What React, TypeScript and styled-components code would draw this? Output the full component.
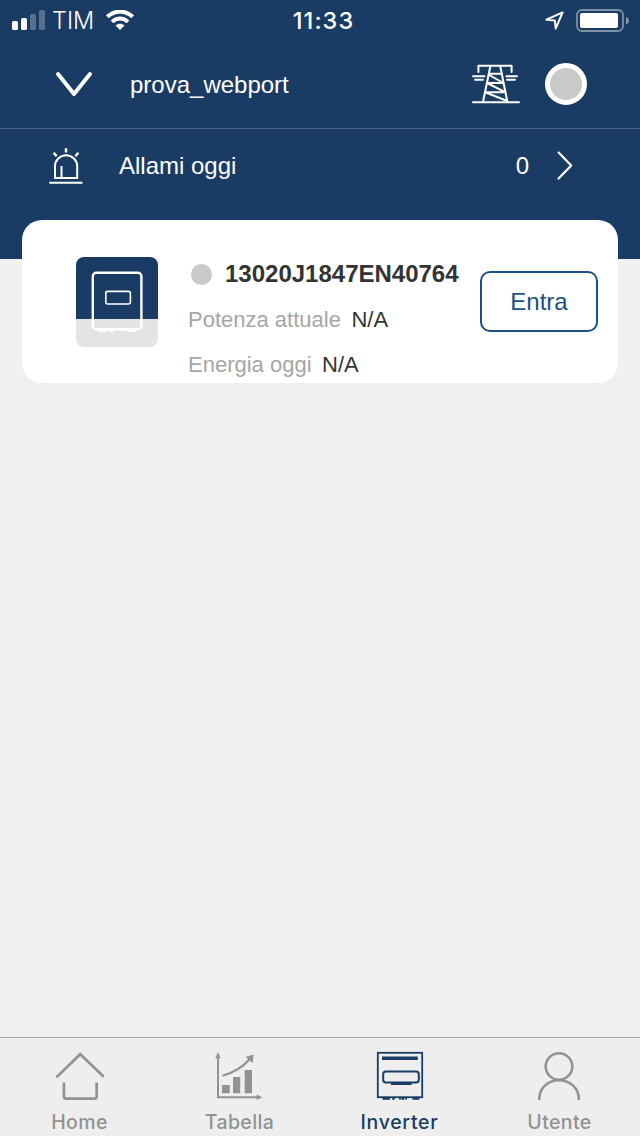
import React from "react";
import styled, { createGlobalStyle } from "styled-components";

const navy = "#193b64";
const grey = "#929292";

const Global = createGlobalStyle`
  * { box-sizing: border-box; }
  html, body { margin: 0; padding: 0; background: #f0f0f0; }
  body { font-family: "Liberation Sans", Arial, sans-serif; }
  svg { display: block; flex: none; }
`;

const Screen = styled.div`
  width: 640px;
  height: 1136px;
  display: flex;
  flex-direction: column;
  background: #f0f0f0;
  overflow: hidden;
`;

const Hero = styled.header`
  height: 259px;
  flex: none;
  background: ${navy};
  color: #fff;
`;

const StatusBar = styled.div`
  height: 40px;
  display: grid;
  grid-template-columns: 1fr auto 1fr;
  align-items: center;
  padding: 0 11px 0 12px;
  font-family: Inter, sans-serif;
`;

const StatusGroup = styled.div<{ $end?: boolean }>`
  display: flex;
  align-items: center;
  gap: ${(p) => (p.$end ? "12px" : "0")};
  justify-content: ${(p) => (p.$end ? "flex-end" : "flex-start")};
`;

const Carrier = styled.span`
  font-size: 23.5px;
  font-weight: 300;
  line-height: 28px;
  margin: 2px 12px 0 6px;
`;

const Clock = styled.span`
  font-size: 23.5px;
  line-height: 28px;
  font-weight: 500;
  letter-spacing: 1.1px;
  margin: 2px 0 0 6px;
`;

const PlantRow = styled.div`
  height: 89px;
  display: flex;
  align-items: center;
  padding: 0 53px 0 55px;
  border-bottom: 1px solid #48627f;
`;

const PlantName = styled.span`
  flex: 1;
  font-size: 24px;
  line-height: 28px;
  margin: 2px 0 0 37px;
`;

const StatusRing = styled.span`
  width: 42px;
  height: 42px;
  margin-left: 25px;
  border: 5px solid #fff;
  border-radius: 50%;
  background: #c9c9c9;
`;

const AlarmRow = styled.div`
  height: 74px;
  display: flex;
  align-items: center;
  padding: 0 66px 0 49px;
  font-size: 24px;
  line-height: 28px;
`;

const AlarmLabel = styled.span`
  flex: 1;
  margin-left: 36px;
`;

const AlarmCount = styled.span`
  margin-right: 27px;
`;

const Card = styled.section`
  height: 163px;
  flex: none;
  margin: -39px 22px 0;
  border-radius: 20px;
  background: #fff;
  display: flex;
  align-items: flex-start;
  overflow: hidden;
  padding: 37px 20px 0 54px;
`;

const Thumb = styled.div`
  width: 82px;
  height: 90px;
  flex: none;
  border-radius: 8px;
  overflow: hidden;
  background: linear-gradient(${navy} 62px, #e4e4e4 62px);
`;

const Details = styled.div`
  flex: 1;
  margin-left: 30px;
  display: flex;
  flex-direction: column;
`;

const Serial = styled.div`
  display: flex;
  align-items: center;
  height: 34px;
  padding-left: 3px;
  color: #333;
  font-size: 24px;
  font-weight: 700;
  white-space: nowrap;
`;

const Dot = styled.i`
  width: 21px;
  height: 21px;
  flex: none;
  margin-right: 13px;
  border-radius: 50%;
  background: #c9c9c9;
`;

const Reading = styled.div`
  display: flex;
  gap: 10.5px;
  height: 45px;
  line-height: 58px;
  font-size: 22px;
  color: #333;
  white-space: nowrap;
`;

const ReadingLabel = styled.span`
  color: #a6a6a6;
`;

const EnterButton = styled.button`
  width: 118px;
  height: 61px;
  flex: none;
  margin-top: 14px;
  padding: 0;
  border: 2px solid #1d4f80;
  border-radius: 10px;
  background: #fff;
  color: #1d4f80;
  font: 24px "Liberation Sans", Arial, sans-serif;
`;

const Spacer = styled.main`
  flex: 1;
`;

const TabBar = styled.nav`
  height: 99px;
  flex: none;
  display: grid;
  grid-template-columns: repeat(4, 1fr);
  border-top: 1px solid #a8a8a8;
  background: #eee;
`;

const Tab = styled.a<{ $active?: boolean }>`
  display: flex;
  flex-direction: column;
  align-items: center;
  padding-top: 12px;
  color: ${(p) => (p.$active ? navy : grey)};
  font: 500 19.5px/24px Inter, sans-serif;
  letter-spacing: ${(p) => (p.$active ? "0.7px" : "0.4px")};
`;

const TabLabel = styled.span`
  margin: 10px 1px 0 0;
`;

const SignalIcon = () => (
  <svg width="34" height="20" viewBox="0 0 34 20" fill="#fff">
    <rect x="0" y="11" width="6" height="9" rx="1.6" />
    <rect x="9" y="8" width="6" height="12" rx="1.6" />
    <rect x="18" y="4" width="6" height="16" rx="1.6" opacity=".27" />
    <rect x="27" y="0" width="6" height="20" rx="1.6" opacity=".27" />
  </svg>
);

const WifiIcon = () => (
  <svg width="28" height="20" viewBox="0 0 28 20" fill="none" stroke="#fff">
    <path d="M1.4 6.8C8.4-.1 19.6-.1 26.6 6.8" strokeWidth="4" />
    <path d="M6 11.8c4.6-4.4 11.4-4.4 16 0" strokeWidth="3.8" />
    <path d="M14 20l-4.4-4.5c2.4-2.3 6.4-2.3 8.8 0z" fill="#fff" stroke="none" />
  </svg>
);

const LocationIcon = () => (
  <svg width="19" height="19" viewBox="0 0 19 19" fill="none" stroke="#fff" strokeWidth="2" strokeLinejoin="round">
    <path d="M17.6 1.4L1.4 8.7l8.5.9.8 8z" />
  </svg>
);

const BatteryIcon = () => (
  <svg width="53" height="23" viewBox="0 0 53 23">
    <rect x="1" y="1" width="46" height="21" rx="5" fill="none" stroke="#7f91a7" strokeWidth="1.8" />
    <rect x="4" y="4" width="38" height="15" rx="1.8" fill="#fff" />
    <path d="M50 8q3 1.4 3 3.7T50 15.5z" fill="#8a9aae" />
  </svg>
);

const ChevronDown = () => (
  <svg width="38" height="26" viewBox="0 0 38 26" fill="none" stroke="#fff" strokeWidth="4" strokeLinecap="round" strokeLinejoin="round">
    <path d="M3 3l16 20L35 3" />
  </svg>
);

const PylonIcon = () => (
  <svg width="48" height="40" viewBox="0 0 48 40" fill="none" stroke="#fff" strokeWidth="2" strokeLinecap="round" strokeLinejoin="round">
    <path d="M6.4 8V1.7h33.2V8M1 38.3h46M18.4 2l-7.4 36M28.2 2l7.2 36" />
    <path d="M1 12.2h11.5M3 15.8h8M34.5 12.2H45M35 15.8h8" strokeWidth="1.9" />
    <path d="M16.8 9.8h13M17.2 11l14.2 8H15L33.2 28.2H13.2L35.2 37" />
  </svg>
);

const SirenIcon = () => (
  <svg width="34" height="36" viewBox="0 0 34 36" fill="none" stroke="#fff" strokeWidth="2">
    <path d="M6 30V18.4a11 11 0 0 1 22.2 0V30zM12.5 30V18M.3 34.8h33.2" />
    <path d="M17 .2v4.4M4.6 4.8l3 3.3M29.4 4.8l-3 3.3" strokeWidth="2.4" />
  </svg>
);

const ChevronRight = () => (
  <svg width="18" height="30" viewBox="0 0 18 30" fill="none" stroke="#fff" strokeWidth="2.2" strokeLinecap="round" strokeLinejoin="round">
    <path d="M2.6 1.6l12.6 13L2.6 27.6" />
  </svg>
);

const DeviceIcon = () => (
  <svg width="82" height="90" viewBox="0 0 82 90" fill="none" stroke="#fff">
    <rect x="16.8" y="15.8" width="48.6" height="56.4" rx="3.5" strokeWidth="2.4" />
    <rect x="29.8" y="34.4" width="24.6" height="12.6" rx="2" strokeWidth="1.6" />
    <path d="M23 73.4h5.6M33.6 73.4h2.6M53 73.4h5.4" strokeWidth="3.2" strokeLinecap="round" />
  </svg>
);

const HomeIcon = () => (
  <svg width="50" height="50" viewBox="0 0 50 50" fill="none" stroke="currentColor" strokeWidth="2.7">
    <path d="M2.2 26.6L25.2 4.2 48 26" strokeLinecap="round" />
    <path d="M8.9 32.6v14q0 2 2 2h28.8q2 0 2-2v-14" />
  </svg>
);

const ChartIcon = () => (
  <svg width="50" height="50" viewBox="0 0 50 50" fill="currentColor">
    <path d="M3 5v42.2h40" fill="none" stroke="currentColor" strokeWidth="2" />
    <path d="M3 2.2l2.7 6H.3zM47.5 47.2l-5.8 2.7v-5.4z" />
    <rect x="7" y="35" width="7.7" height="8.2" />
    <rect x="18" y="27" width="7.2" height="16.2" />
    <rect x="29.7" y="20" width="7.3" height="23.2" />
    <path d="M7.4 25.8C19 22.5 27 18 34.3 9.5" fill="none" stroke="currentColor" strokeWidth="2.1" />
    <path d="M38.5 4.6l-.8 8.6-7-6.2z" />
  </svg>
);

const InverterIcon = () => (
  <svg width="50" height="50" viewBox="0 0 50 50" fill="none" stroke="currentColor">
    <rect x="2.8" y="2.8" width="44.4" height="44.4" strokeWidth="1.8" />
    <path d="M7 8.2h35.8" strokeWidth="3.6" />
    <rect x="8.2" y="21.6" width="35.6" height="10.8" rx="2.6" strokeWidth="2" />
    <path d="M16 33.8h20.6" strokeWidth="2.4" />
    <path d="M7.5 48.6h7.5M17.2 48.6h2.6M24 48.4h2.4M27 49h2M29.8 48.4H32M37.4 48.6h7" strokeWidth="2.4" />
  </svg>
);

const UserIcon = () => (
  <svg width="50" height="50" viewBox="0 0 50 50" fill="none" stroke="currentColor" strokeWidth="2.6">
    <circle cx="24" cy="16.5" r="13.3" />
    <path d="M4.3 49c0-11.2 9-18.8 19.7-18.8S43.8 37.8 43.8 49" strokeLinecap="round" />
  </svg>
);

const tabs = [
  { label: "Home", Icon: HomeIcon },
  { label: "Tabella", Icon: ChartIcon },
  { label: "Inverter", Icon: InverterIcon, active: true },
  { label: "Utente", Icon: UserIcon },
];

const readings = [
  { label: "Potenza attuale", value: "N/A" },
  { label: "Energia oggi", value: "N/A" },
];

export default function App() {
  return (
    <Screen>
      <Global />
      <Hero>
        <StatusBar>
          <StatusGroup>
            <SignalIcon />
            <Carrier>TIM</Carrier>
            <WifiIcon />
          </StatusGroup>
          <Clock>11:33</Clock>
          <StatusGroup $end>
            <LocationIcon />
            <BatteryIcon />
          </StatusGroup>
        </StatusBar>
        <PlantRow>
          <ChevronDown />
          <PlantName>prova_webport</PlantName>
          <PylonIcon />
          <StatusRing />
        </PlantRow>
        <AlarmRow>
          <SirenIcon />
          <AlarmLabel>Allami oggi</AlarmLabel>
          <AlarmCount>0</AlarmCount>
          <ChevronRight />
        </AlarmRow>
      </Hero>
      <Card>
        <Thumb>
          <DeviceIcon />
        </Thumb>
        <Details>
          <Serial>
            <Dot />
            13020J1847EN40764
          </Serial>
          {readings.map((r) => (
            <Reading key={r.label}>
              <ReadingLabel>{r.label}</ReadingLabel>
              <span>{r.value}</span>
            </Reading>
          ))}
        </Details>
        <EnterButton>Entra</EnterButton>
      </Card>
      <Spacer />
      <TabBar>
        {tabs.map(({ label, Icon, active }) => (
          <Tab key={label} $active={active}>
            <Icon />
            <TabLabel>{label}</TabLabel>
          </Tab>
        ))}
      </TabBar>
    </Screen>
  );
}
